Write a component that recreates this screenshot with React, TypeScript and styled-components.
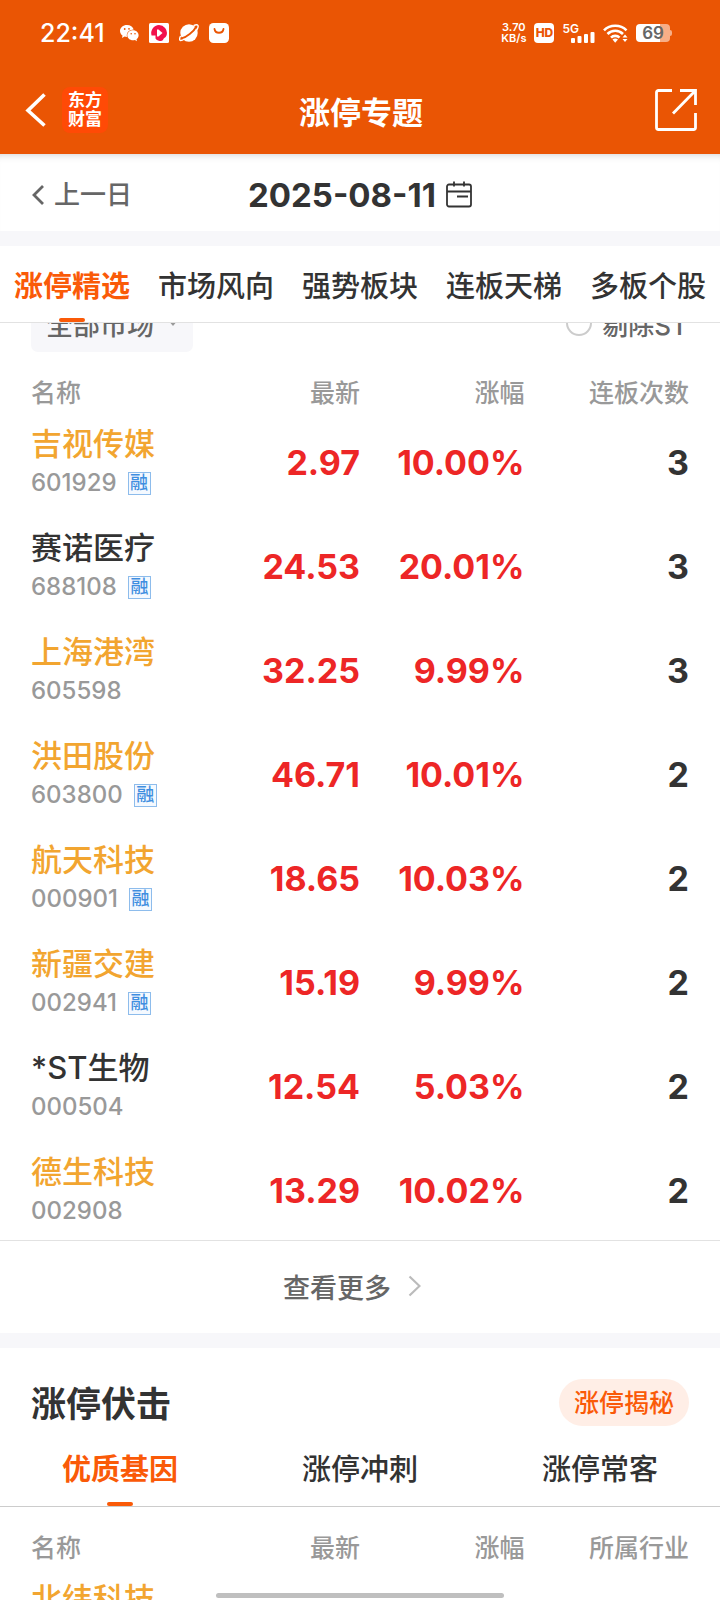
import React from "react";
import styled, { createGlobalStyle } from "styled-components";

const color = {
  brand: "#ea5504",
  accent: "#fa5a08",
  ink: "#333333",
  sub: "#666666",
  mute: "#999999",
  rise: "#ed2626",
  gold: "#f2a530",
  band: "#f7f7fa",
  line: "#e2e2e2",
};

const Global = createGlobalStyle`
  * { box-sizing: border-box; }
  body {
    margin: 0;
    background: #fff;
    color: ${color.ink};
    font-family: Inter, "Noto Sans CJK SC", sans-serif;
    font-weight: 500;
  }
  button, input { font: inherit; color: inherit; margin: 0; padding: 0; border: 0; background: none; }
  button { cursor: pointer; white-space: nowrap; }
  a { color: inherit; text-decoration: none; }
  h1, h2 { margin: 0; }
  svg { display: block; flex: none; }
`;

const Screen = styled.div`
  position: relative;
  display: flex;
  flex-direction: column;
  height: 100vh;
  overflow: hidden;
`;

const TopArea = styled.header`
  flex: none;
  background: ${color.brand};
  color: #fff;
`;

const StatusBar = styled.div`
  display: flex;
  align-items: center;
  justify-content: space-between;
  height: 66px;
  padding: 0 48px 0 40px;
`;

const StatusGroup = styled.div<{ $gap: number }>`
  display: flex;
  align-items: center;
  gap: ${(p) => p.$gap}px;
`;

const Clock = styled.time`
  margin-right: 5px;
  font-size: 25px;
  line-height: 28px;
`;

const NetSpeed = styled.div`
  display: flex;
  flex-direction: column;
  align-items: center;
  font-size: 11px;
  font-weight: 600;
  line-height: 11px;
`;

const HdTag = styled.span`
  width: 20px;
  height: 20px;
  border-radius: 4px;
  background: #fff;
  color: ${color.brand};
  font-size: 12px;
  font-weight: 800;
  line-height: 20px;
  text-align: center;
`;

const Signal = styled.div`
  display: flex;
  align-items: flex-start;
  height: 20px;
  font-size: 12px;
  font-weight: 600;
  line-height: 11px;

  svg { margin: 9px 0 0 -8px; }
`;

const Battery = styled.div`
  display: flex;
  align-items: center;
`;

const BatteryBody = styled.span`
  width: 34px;
  height: 18px;
  border-radius: 4px;
  background: linear-gradient(90deg, #fff 70%, #f7ae87 70%);
  color: #666;
  font-size: 17px;
  font-weight: 600;
  line-height: 19px;
  text-align: center;
`;

const BatteryTip = styled.span`
  width: 2px;
  height: 6px;
  border-radius: 0 2px 2px 0;
  background: #f7ae87;
`;

const NavBar = styled.div`
  display: grid;
  grid-template-columns: 1fr auto 1fr;
  align-items: center;
  height: 88px;
  padding: 0 22px 0 24px;
`;

const NavStart = styled.div`
  display: flex;
  align-items: center;
  gap: 16px;
`;

const NavEnd = styled(NavStart)`
  justify-content: flex-end;
`;

const BrandLogo = styled.a`
  width: 46px;
  height: 46px;
  padding: 4px 0;
  border-radius: 8px;
  background: #ff4a06;
  color: #fff;
  font-size: 17px;
  font-weight: 700;
  line-height: 19px;
  text-align: center;

  span { display: block; }
`;

const PageTitle = styled.h1`
  padding-top: 5px;
  font-size: 31px;
  font-weight: 700;
  line-height: 44px;
`;

const DateBar = styled.div`
  display: grid;
  grid-template-columns: 1fr auto 1fr;
  align-items: center;
  flex: none;
  height: 77px;
  padding: 4px 32px 0;
  box-shadow: inset 0 8px 8px -8px rgba(0, 0, 0, 0.22);
`;

const PrevDay = styled.button`
  display: flex;
  align-items: center;
  gap: 10px;
  color: ${color.sub};
  font-size: 26px;
  line-height: 36px;
`;

const DatePicker = styled.button`
  display: flex;
  align-items: center;
  gap: 10px;
  font-size: 33px;
  font-weight: 700;
  line-height: 40px;
`;

const Band = styled.div`
  flex: none;
  height: 15px;
  background: ${color.band};
`;

const TopTabs = styled.nav`
  display: flex;
  justify-content: space-between;
  flex: none;
  height: 77px;
  padding: 0 14px;
  border-bottom: 1px solid ${color.line};
`;

const Tab = styled.button<{ $active?: boolean }>`
  display: flex;
  flex-direction: column;
  align-items: center;
  justify-content: space-between;
  padding-top: 20px;
  color: ${(p) => (p.$active ? color.accent : color.ink)};
  font-size: 29px;
  font-weight: ${(p) => (p.$active ? 700 : 500)};
  line-height: 42px;

  &::after {
    content: "";
    width: 26px;
    height: 4px;
    border-radius: 2px;
    background: ${(p) => (p.$active ? color.accent : "transparent")};
  }
`;

const Content = styled.main`
  flex: 1;
  min-height: 0;
  overflow: hidden;
`;

const FilterBar = styled.div`
  display: flex;
  align-items: flex-end;
  justify-content: space-between;
  height: 29px;
  padding: 0 32px 0 31px;
  overflow: hidden;
`;

const MarketFilter = styled.button`
  display: flex;
  align-items: center;
  flex: none;
  gap: 13px;
  height: 58px;
  padding: 0 14px 0 15px;
  border-radius: 7px;
  background: ${color.band};
  color: ${color.sub};
  font-size: 27px;
`;

const StFilter = styled.label`
  display: flex;
  align-items: center;
  flex: none;
  gap: 10px;
  height: 58px;
  color: ${color.sub};
  font-size: 26px;

  input {
    appearance: none;
    width: 26px;
    height: 26px;
    border: 2px solid #ccc;
    border-radius: 50%;
  }
`;

const TablePad = styled.div`
  padding: 0 31px;
`;

const Table = styled.table`
  width: 100%;
  border-collapse: collapse;
  table-layout: fixed;
`;

const HeadCell = styled.th<{ $w: number }>`
  width: ${(p) => p.$w}%;
  height: 56px;
  padding: 26px 0 0;
  color: ${color.mute};
  font-size: 25px;
  font-weight: 500;
  line-height: 30px;
  text-align: right;

  &:first-child { text-align: left; }
`;

const NameCell = styled.td`
  height: 104px;
  padding: 14px 0 0;
  vertical-align: top;
`;

const StockName = styled.a<{ $gold?: boolean }>`
  display: block;
  color: ${(p) => (p.$gold ? color.gold : color.ink)};
  font-size: 31px;
  line-height: 44px;
  white-space: nowrap;
`;

const CodeLine = styled.div`
  display: flex;
  align-items: center;
  gap: 11px;
  height: 34px;
  color: ${color.mute};
  font-size: 24px;
  line-height: 34px;
`;

const MarginTag = styled.span`
  width: 23px;
  height: 23px;
  border: 1px solid #8dbcec;
  background: #f4f9ff;
  color: #3f8ee0;
  font-size: 18px;
  line-height: 20px;
  text-align: center;
`;

const ValueCell = styled.td<{ $rise?: boolean }>`
  padding: 5px 0 0;
  color: ${(p) => (p.$rise ? color.rise : color.ink)};
  font-size: 34px;
  font-weight: 700;
  line-height: 44px;
  text-align: right;
`;

const MoreButton = styled.button`
  display: flex;
  align-items: center;
  justify-content: center;
  gap: 17px;
  width: 100%;
  height: 93px;
  padding: 0 16px 2px 0;
  border-top: 1px solid ${color.line};
  color: ${color.sub};
  font-size: 27px;
`;

const SectionHead = styled.div`
  display: flex;
  align-items: center;
  justify-content: space-between;
  padding: 31px 31px 0;
`;

const SectionTitle = styled.h2`
  font-size: 35px;
  font-weight: 700;
  line-height: 51px;
  height: 47px;
`;

const SecretLink = styled.a`
  height: 47px;
  padding: 0 15px;
  border-radius: 24px;
  background: #ffeee6;
  color: ${color.accent};
  font-size: 25px;
  line-height: 49px;
`;

const SubTabs = styled.nav`
  display: grid;
  grid-template-columns: repeat(3, 1fr);
  height: 81px;
  border-bottom: 1px solid #ccc;

  button { padding-top: 23px; }
`;

const HomeBar = styled.div`
  position: absolute;
  bottom: 2px;
  left: 30%;
  width: 40%;
  height: 5px;
  border-radius: 3px;
  background: #bfbfbf;
`;

const ChatIcon = () => (
  <svg width="19" height="17" viewBox="0 0 19 17">
    <path fill="#fff" d="M7 0C3 0 0 2.700 0 6c0 1.900 1 3.500 2.500 4.600L2 13l2.600-1.400c.8.200 1.600.3 2.400.3C6 8 9 4.600 13.700 4.500 13 1.900 10.300 0 7 0z" />
    <path fill="#fff" d="M13 5.300c-3.300 0-5.700 2.200-5.700 5s2.400 5 5.700 5c.7 0 1.300-.1 1.900-.3L17 16.200l-.5-2c1.300-.9 2.100-2.300 2.100-3.900 0-2.800-2.400-5-5.600-5z" />
    <circle cx="4.700" cy="4" r="0.900" fill={color.brand} />
    <circle cx="9" cy="3.800" r="0.900" fill={color.brand} />
    <circle cx="11.200" cy="8.800" r="0.800" fill={color.brand} />
    <circle cx="15" cy="8.800" r="0.800" fill={color.brand} />
  </svg>
);

const VideoIcon = () => (
  <svg width="20" height="20" viewBox="0 0 20 20">
    <rect width="20" height="20" rx="1.500" fill="#fff" />
    <path fill="#f2104c" d="M10 2a8 8 0 0 1 7.800 9.500c-.6 3-2.800 3.300-3.300 4.500-.5 1.200-1.500 2-2.500 2-1.500 0-4.500-.5-5.500-2.500V12.500H2.600A8 8 0 0 1 10 2z" />
    <path fill="#fff" d="M8 6.500v7h1.500L13.500 10 9.500 6.500z" />
  </svg>
);

const PlanetIcon = () => (
  <svg width="20" height="20" viewBox="0 0 20 20">
    <circle cx="10" cy="10" r="8.700" fill="#fff" />
    <path d="M2.500 15.500C7 14.500 15 8.500 17.300 3.500" fill="none" stroke={color.brand} strokeWidth="1.800" />
    <path d="M1.600 13C.3 15.500.2 17.300 1.500 17.500c1 .1 2.500-.5 4-1.500M14.500 2.700c2-1 3.800-1.200 4.400-.4.500.8.100 2.700-1 4.700" fill="none" stroke="#fff" strokeWidth="1.400" />
  </svg>
);

const BagIcon = () => (
  <svg width="20" height="20" viewBox="0 0 20 20">
    <rect width="20" height="20" rx="4.500" fill="#fff" />
    <path d="M5.500 6c.8 5 8.200 5 9 0" fill="none" stroke={color.brand} strokeWidth="1.800" strokeLinecap="round" />
  </svg>
);

const BarsIcon = () => (
  <svg width="24" height="11" viewBox="0 0 24 11" fill="#fff">
    <rect x="0" y="6" width="4" height="5" rx="1" />
    <rect x="6.500" y="4" width="4" height="7" rx="1" />
    <rect x="13" y="2" width="4" height="9" rx="1" />
    <rect x="19.500" y="0" width="4" height="11" rx="1" />
  </svg>
);

const WifiIcon = () => (
  <svg width="25" height="19" viewBox="0 0 25 19">
    <g fill="none" stroke="#fff" strokeWidth="2.600">
      <path d="M1 6.300C7 .2 17.500.2 23.500 6.300" />
      <path d="M4.500 10c4.200-4.300 11.300-4.300 15.500 0" />
      <path d="M8 13.700c2.300-2.500 6.200-2.500 8.500 0" />
    </g>
    <path fill="#fff" d="M9.500 15.500c1.600-1.300 3.900-1.300 5.500 0L12.200 18.700z" />
    <path fill="#fff" d="M19.500 13.500l2.500-3 2.500 3zM19.500 15l2.500 3 2.500-3z" />
  </svg>
);

const BackIcon = () => (
  <svg width="22" height="36" viewBox="0 0 22 36">
    <path d="M20.500 2.500L4 18.500l16.500 15" fill="none" stroke="#fff" strokeWidth="3.600" />
  </svg>
);

const ShareIcon = () => (
  <svg width="44" height="44" viewBox="0 0 44 44" fill="none" stroke="#fff" strokeWidth="2.800">
    <path d="M18 2.500H4.500a2 2 0 0 0-2 2v35a2 2 0 0 0 2 2h35a2 2 0 0 0 2-2V25" />
    <path d="M26 2.500h15.500V17M41 3L19 25.500" />
  </svg>
);

const PrevIcon = () => (
  <svg width="12" height="20" viewBox="0 0 12 20">
    <path d="M11 1L2 10l9 9" fill="none" stroke={color.sub} strokeWidth="2.800" />
  </svg>
);

const CalendarIcon = () => (
  <svg width="26" height="27" viewBox="0 0 26 27" fill="none" stroke={color.ink} strokeWidth="1.800">
    <rect x="1" y="3.500" width="24" height="22" rx="2" />
    <path d="M1 10.500h24M8 0.500v5M18 0.500v5M11 15.500h11" />
  </svg>
);

const CaretIcon = () => (
  <svg width="12" height="7" viewBox="0 0 12 7">
    <path d="M1 0h10L6 6z" fill={color.mute} />
  </svg>
);

const NextIcon = () => (
  <svg width="13" height="22" viewBox="0 0 13 22">
    <path d="M1.500 1.500l10 9.500-10 9.500" fill="none" stroke="#bbb" strokeWidth="2.200" />
  </svg>
);

type Stock = {
  name: string;
  code: string;
  gold?: boolean;
  margin?: boolean;
  price?: string;
  change?: string;
  last?: string;
};

const limitUps: Stock[] = [
  { name: "吉视传媒", code: "601929", gold: true, margin: true, price: "2.97", change: "10.00%", last: "3" },
  { name: "赛诺医疗", code: "688108", margin: true, price: "24.53", change: "20.01%", last: "3" },
  { name: "上海港湾", code: "605598", gold: true, price: "32.25", change: "9.99%", last: "3" },
  { name: "洪田股份", code: "603800", gold: true, margin: true, price: "46.71", change: "10.01%", last: "2" },
  { name: "航天科技", code: "000901", gold: true, margin: true, price: "18.65", change: "10.03%", last: "2" },
  { name: "新疆交建", code: "002941", gold: true, margin: true, price: "15.19", change: "9.99%", last: "2" },
  { name: "*ST生物", code: "000504", price: "12.54", change: "5.03%", last: "2" },
  { name: "德生科技", code: "002908", gold: true, price: "13.29", change: "10.02%", last: "2" },
];

const ambush: Stock[] = [{ name: "北纬科技", code: "", gold: true }];

function StockTable({ lastTitle, stocks }: { lastTitle: string; stocks: Stock[] }) {
  return (
    <TablePad>
      <Table>
        <thead>
          <tr>
            <HeadCell $w={27}>名称</HeadCell>
            <HeadCell $w={23}>最新</HeadCell>
            <HeadCell $w={25}>涨幅</HeadCell>
            <HeadCell $w={25}>{lastTitle}</HeadCell>
          </tr>
        </thead>
        <tbody>
          {stocks.map((s) => (
            <tr key={s.name}>
              <NameCell>
                <StockName href="#" $gold={s.gold}>{s.name}</StockName>
                <CodeLine>
                  {s.code}
                  {s.margin && <MarginTag>融</MarginTag>}
                </CodeLine>
              </NameCell>
              <ValueCell $rise>{s.price}</ValueCell>
              <ValueCell $rise>{s.change}</ValueCell>
              <ValueCell>{s.last}</ValueCell>
            </tr>
          ))}
        </tbody>
      </Table>
    </TablePad>
  );
}

export default function App() {
  return (
    <Screen>
      <Global />
      <TopArea>
        <StatusBar>
          <StatusGroup $gap={10}>
            <Clock>22:41</Clock>
            <ChatIcon />
            <VideoIcon />
            <PlanetIcon />
            <BagIcon />
          </StatusGroup>
          <StatusGroup $gap={8}>
            <NetSpeed><span>3.70</span><span>KB/s</span></NetSpeed>
            <HdTag>HD</HdTag>
            <Signal>5G<BarsIcon /></Signal>
            <WifiIcon />
            <Battery>
              <BatteryBody>69</BatteryBody>
              <BatteryTip />
            </Battery>
          </StatusGroup>
        </StatusBar>
        <NavBar>
          <NavStart>
            <button aria-label="返回"><BackIcon /></button>
            <BrandLogo href="#"><span>东方</span><span>财富</span></BrandLogo>
          </NavStart>
          <PageTitle>涨停专题</PageTitle>
          <NavEnd>
            <button aria-label="分享"><ShareIcon /></button>
          </NavEnd>
        </NavBar>
      </TopArea>

      <DateBar>
        <PrevDay><PrevIcon />上一日</PrevDay>
        <DatePicker>2025-08-11<CalendarIcon /></DatePicker>
      </DateBar>
      <Band />
      <TopTabs>
        {["涨停精选", "市场风向", "强势板块", "连板天梯", "多板个股"].map((t, i) => (
          <Tab key={t} $active={i === 0}>{t}</Tab>
        ))}
      </TopTabs>

      <Content>
        <FilterBar>
          <MarketFilter>全部市场<CaretIcon /></MarketFilter>
          <StFilter><input type="checkbox" />剔除ST</StFilter>
        </FilterBar>
        <StockTable lastTitle="连板次数" stocks={limitUps} />
        <MoreButton>查看更多<NextIcon /></MoreButton>
        <Band />
        <SectionHead>
          <SectionTitle>涨停伏击</SectionTitle>
          <SecretLink href="#">涨停揭秘</SecretLink>
        </SectionHead>
        <SubTabs>
          {["优质基因", "涨停冲刺", "涨停常客"].map((t, i) => (
            <Tab key={t} $active={i === 0}>{t}</Tab>
          ))}
        </SubTabs>
        <StockTable lastTitle="所属行业" stocks={ambush} />
      </Content>
      <HomeBar />
    </Screen>
  );
}
